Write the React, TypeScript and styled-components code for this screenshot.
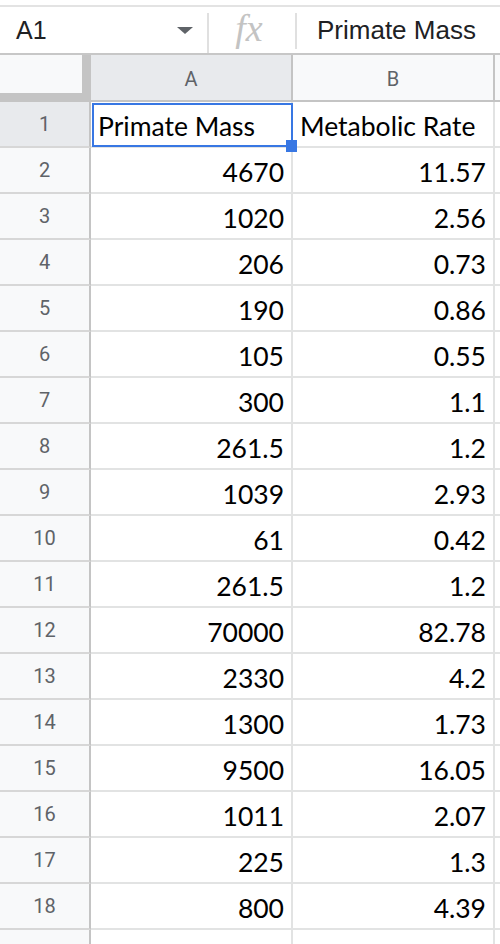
import React from 'react';
import styled, { createGlobalStyle } from 'styled-components';

const rows: [string, string][] = [
  ['Primate Mass', 'Metabolic Rate'],
  ['4670', '11.57'],
  ['1020', '2.56'],
  ['206', '0.73'],
  ['190', '0.86'],
  ['105', '0.55'],
  ['300', '1.1'],
  ['261.5', '1.2'],
  ['1039', '2.93'],
  ['61', '0.42'],
  ['261.5', '1.2'],
  ['70000', '82.78'],
  ['2330', '4.2'],
  ['1300', '1.73'],
  ['9500', '16.05'],
  ['1011', '2.07'],
  ['225', '1.3'],
  ['800', '4.39'],
  ['', ''],
];

export default function App() {
  return (
    <>
      <GlobalStyle />
      <Page>
        <FormulaBar>
          <NameBox>
            <CellRef>A1</CellRef>
            <Caret />
          </NameBox>
          <FxBox>
            <Fx>fx</Fx>
          </FxBox>
          <FormulaText>Primate Mass</FormulaText>
        </FormulaBar>

        <Grid>
          <Corner>
            <CornerInner />
          </Corner>
          <ColHeader $active>A</ColHeader>
          <ColHeader>B</ColHeader>
          <ColHeader $edge />

          {rows.map(([a, b], i) => {
            const n = i + 1;
            const isText = i === 0;
            return (
              <React.Fragment key={n}>
                <RowHeader $active={n === 1}>{n}</RowHeader>
                <Cell $text={isText} $selected={n === 1}>
                  {a}
                  {n === 1 && <Handle />}
                </Cell>
                <Cell $text={isText}>{b}</Cell>
                <Cell $edge />
              </React.Fragment>
            );
          })}
        </Grid>
      </Page>
    </>
  );
}

const GlobalStyle = createGlobalStyle`
  html, body {
    margin: 0;
    padding: 0;
    background: #ffffff;
    overflow: hidden;
  }
  * {
    box-sizing: border-box;
  }
`;

const Page = styled.div`
  width: 500px;
  height: 944px;
  overflow: hidden;
  background: #ffffff;
  padding-top: 5px;
`;

const FormulaBar = styled.div`
  display: flex;
  align-items: stretch;
  height: 50px;
  border-top: 2px solid #e3e3e3;
  border-bottom: 2px solid #c7c7c7;
  font-family: 'Liberation Sans', Arial, sans-serif;
`;

const NameBox = styled.div`
  width: 209px;
  display: flex;
  align-items: center;
  padding-left: 16px;
  padding-right: 14px;
  margin-top: 6px;
  border-right: 2px solid #e0e0e0;
`;

const CellRef = styled.span`
  flex: 1;
  font-size: 25px;
  color: #202124;
  margin-top: -6px;
`;

const Caret = styled.span`
  width: 0;
  height: 0;
  margin-top: -6px;
  border-left: 8px solid transparent;
  border-right: 8px solid transparent;
  border-top: 7px solid #5f6368;
`;

const FxBox = styled.div`
  width: 88px;
  display: flex;
  align-items: center;
  justify-content: center;
  margin: 6px 0 4px;
  border-right: 2px solid #e0e0e0;
`;

const Fx = styled.span`
  font-family: 'Liberation Serif', 'Times New Roman', serif;
  font-style: italic;
  font-size: 38px;
  color: #c3c3c3;
  margin-top: -6px;
  margin-left: -6px;
`;

const FormulaText = styled.div`
  display: flex;
  align-items: center;
  padding-left: 20px;
  font-size: 26px;
  color: #202124;
`;

const Grid = styled.div`
  display: grid;
  grid-template-columns: 91px 202px 202px 1fr;
  grid-auto-rows: 46px;
  grid-template-rows: 47px;
`;

const Corner = styled.div`
  background: #c4c4c4;
`;

const CornerInner = styled.div`
  width: 82px;
  height: 38px;
  background: #f8f9fa;
`;

const ColHeader = styled.div<{ $active?: boolean; $edge?: boolean }>`
  display: flex;
  align-items: center;
  justify-content: center;
  padding-top: 2px;
  background: ${(p) => (p.$active ? '#e8eaed' : '#f8f9fa')};
  border-right: ${(p) => (p.$edge ? 'none' : '2px solid #c4c4c4')};
  border-bottom: 2px solid #c4c4c4;
  font-family: Roboto, 'Liberation Sans', Arial, sans-serif;
  font-size: 20px;
  color: #5f6368;
`;

const RowHeader = styled.div<{ $active?: boolean }>`
  display: flex;
  align-items: center;
  justify-content: center;
  background: ${(p) => (p.$active ? '#e8eaed' : '#f8f9fa')};
  border-right: 2px solid #c4c4c4;
  border-bottom: 2px solid #d7d7d7;
  font-family: Roboto, 'Liberation Sans', Arial, sans-serif;
  font-size: 20px;
  color: #5f6368;
`;

const Cell = styled.div<{ $text?: boolean; $selected?: boolean; $edge?: boolean }>`
  position: relative;
  display: flex;
  align-items: center;
  justify-content: ${(p) => (p.$text ? 'flex-start' : 'flex-end')};
  padding: 3px 7px 0 7px;
  border-right: ${(p) => (p.$edge ? 'none' : '2px solid #e2e3e3')};
  border-bottom: 2px solid #e2e3e3;
  font-family: Lato, 'Open Sans', sans-serif;
  font-size: 26.5px;
  color: #000000;
  white-space: nowrap;

  ${(p) =>
    p.$selected &&
    `
    &::after {
      content: '';
      position: absolute;
      left: 1px;
      top: 1px;
      right: -2px;
      bottom: -1px;
      border: 2px solid #3877e3;
      pointer-events: none;
    }
  `}
`;

const Handle = styled.span`
  position: absolute;
  right: -6px;
  bottom: -6px;
  width: 11px;
  height: 12px;
  background: #3877e3;
  z-index: 2;
`;
